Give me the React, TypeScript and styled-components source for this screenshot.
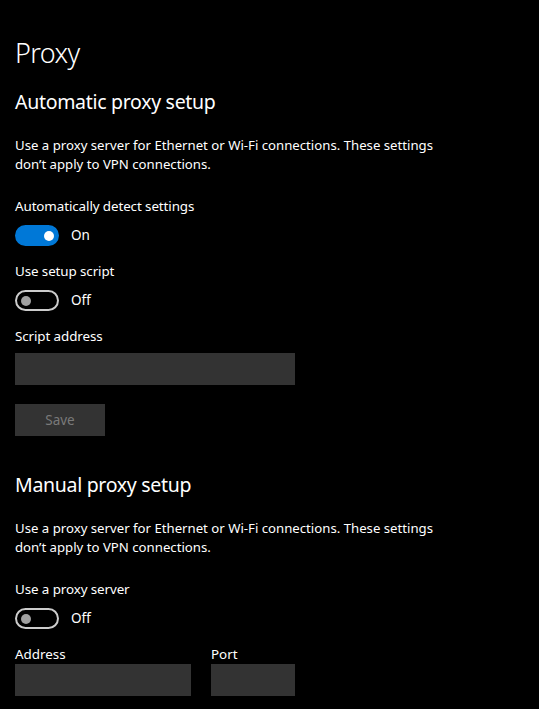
import React from "react";
import styled, { createGlobalStyle } from "styled-components";

const GlobalStyle = createGlobalStyle`
  html, body {
    margin: 0;
    padding: 0;
    background: #000000;
  }
  body {
    font-family: "Segoe UI", "Noto Sans", "Open Sans", sans-serif;
    color: #ffffff;
  }
`;

interface ToggleProps {
  on?: boolean;
}

const Page = styled.div`
  width: 539px;
  height: 709px;
  overflow: hidden;
  padding: 35px 0 0 15px;
  box-sizing: border-box;
  background: #000000;
`;

const Title = styled.h1`
  margin: 0;
  font-size: 27px;
  font-weight: 300;
  line-height: 36px;
  letter-spacing: -0.6px;
`;

const SectionTitle = styled.h2<{ top: number }>`
  margin: ${(p) => p.top}px 0 0 0;
  font-size: 19.5px;
  font-weight: 400;
  line-height: 28px;
  letter-spacing: -0.3px;
`;

const Description = styled.p`
  margin: 20px 0 0 0;
  width: 440px;
  font-size: 13.2px;
  line-height: 19px;
`;

const Label = styled.div<{ top: number }>`
  margin-top: ${(p) => p.top}px;
  font-size: 13.4px;
  line-height: 19px;
  letter-spacing: -0.1px;
`;

const ToggleRow = styled.div`
  display: flex;
  align-items: center;
  gap: 12px;
  margin-top: 9px;
  height: 21px;
`;

const Track = styled.div<ToggleProps>`
  position: relative;
  width: 44px;
  height: 21px;
  box-sizing: border-box;
  border-radius: 11px;
  border: 2px solid ${(p) => (p.on ? "#0078d7" : "#cccccc")};
  background: ${(p) => (p.on ? "#0078d7" : "transparent")};
`;

const Knob = styled.div<ToggleProps>`
  position: absolute;
  top: 3.5px;
  left: ${(p) => (p.on ? "27px" : "4px")};
  width: 10px;
  height: 10px;
  border-radius: 50%;
  background: ${(p) => (p.on ? "#ffffff" : "#a0a0a0")};
`;

const ToggleText = styled.span`
  font-size: 13.5px;
  line-height: 21px;
`;

const Input = styled.div<{ width: number; top?: number }>`
  width: ${(p) => p.width}px;
  height: 32px;
  margin-top: ${(p) => p.top ?? 0}px;
  background: #333333;
`;

const SaveButton = styled.button`
  display: block;
  margin-top: 19px;
  width: 90px;
  height: 32px;
  border: none;
  padding: 0;
  background: #333333;
  color: #7a7a7a;
  font-family: inherit;
  font-size: 13.5px;
`;

const FieldRow = styled.div`
  display: flex;
  gap: 20px;
  margin-top: 16px;
`;

const Field = styled.div``;

const FieldLabel = styled.div`
  font-size: 13.4px;
  line-height: 19px;
`;

const Toggle = ({ on }: ToggleProps) => (
  <ToggleRow>
    <Track on={on}>
      <Knob on={on} />
    </Track>
    <ToggleText>{on ? "On" : "Off"}</ToggleText>
  </ToggleRow>
);

const desc =
  "Use a proxy server for Ethernet or Wi-Fi connections. These settings don\u2019t apply to VPN connections.";

export default function App() {
  return (
    <>
      <GlobalStyle />
      <Page>
        <Title>Proxy</Title>
        <SectionTitle top={17}>Automatic proxy setup</SectionTitle>
        <Description>{desc}</Description>
        <Label top={23}>Automatically detect settings</Label>
        <Toggle on />
        <Label top={16}>Use setup script</Label>
        <Toggle />
        <Label top={16}>Script address</Label>
        <Input width={280} top={7} />
        <SaveButton>Save</SaveButton>

        <SectionTitle top={35}>Manual proxy setup</SectionTitle>
        <Description>{desc}</Description>
        <Label top={23}>Use a proxy server</Label>
        <Toggle />
        <FieldRow>
          <Field>
            <FieldLabel>Address</FieldLabel>
            <Input width={176} />
          </Field>
          <Field>
            <FieldLabel>Port</FieldLabel>
            <Input width={84} />
          </Field>
        </FieldRow>
      </Page>
    </>
  );
}
